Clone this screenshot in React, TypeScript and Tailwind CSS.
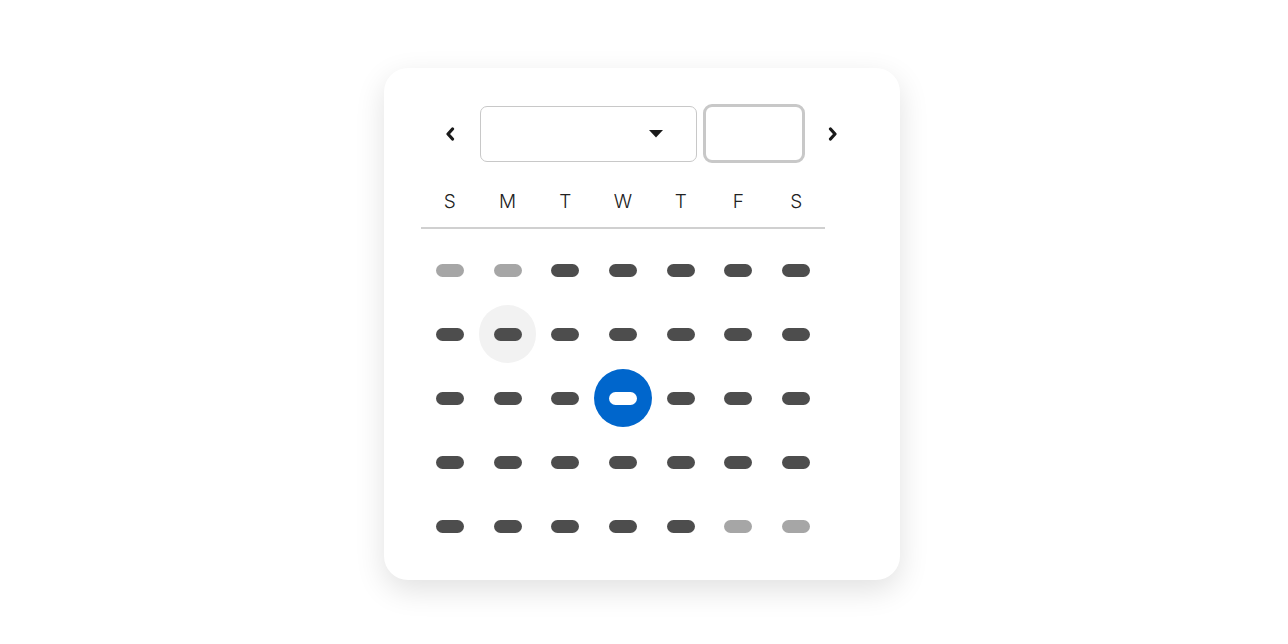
import React from 'react';

const DAYS = ['S', 'M', 'T', 'W', 'T', 'F', 'S'];

// 0 = muted, 1 = normal, 2 = hovered, 3 = selected
const WEEKS: number[][] = [
    [0, 0, 1, 1, 1, 1, 1],
    [1, 2, 1, 1, 1, 1, 1],
    [1, 1, 1, 3, 1, 1, 1],
    [1, 1, 1, 1, 1, 1, 1],
    [1, 1, 1, 1, 1, 0, 0],
];

const DayCell: React.FC<{ state: number }> = ({ state }) => {
    const circle =
        state === 3 ? 'bg-[#0066cc]' : state === 2 ? 'bg-[#f2f2f2]' : 'bg-transparent';
    const pill =
        state === 3 ? 'bg-white' : state === 0 ? 'bg-[#a6a6a6]' : 'bg-[#4d4d4d]';
    return (
        <div className="h-[64px] flex items-center justify-center">
            <div className={`w-[58px] h-[58px] rounded-full flex items-center justify-center ${circle}`}>
                <div className={`w-[28px] h-[13px] rounded-full ${pill}`} />
            </div>
        </div>
    );
};

const Chevron: React.FC<{ dir: 'left' | 'right' }> = ({ dir }) => (
    <svg width="10" height="14" viewBox="0 0 10 14" fill="none">
        <polyline
            points={dir === 'left' ? '7.5,2 3,7 7.5,12' : '2.5,2 7,7 2.5,12'}
            stroke="#1a1a1a"
            strokeWidth="3.2"
            strokeLinecap="round"
            strokeLinejoin="round"
        />
    </svg>
);

export default function App() {
    return (
        <div className="min-h-screen bg-white flex justify-center pt-[68px] pr-[4px]" style={{ fontFamily: 'Inter, "Liberation Sans", sans-serif' }}>
            <div className="w-[516px] h-[512px] bg-white rounded-[24px] shadow-[0_10px_30px_rgba(0,0,0,0.12)] pl-[37px] pt-[36px]">
                {/* Header */}
                <div className="flex items-center h-[59px]">
                    <button className="w-[58px] h-full flex items-center justify-center">
                        <Chevron dir="left" />
                    </button>
                    <div className="ml-[1px] w-[217px] h-[56px] border border-[#c8c8c8] rounded-[7px] flex items-center justify-end pr-[33px]">
                        <svg width="14" height="8" viewBox="0 0 14 8">
                            <polygon points="0,0 14,0 7,7.5" fill="#1a1a1a" />
                        </svg>
                    </div>
                    <div className="ml-[6px] w-[102px] h-[59px] border-[3px] border-[#c8c8c8] rounded-[9px]" />
                    <button className="w-[56px] h-full flex items-center justify-center">
                        <Chevron dir="right" />
                    </button>
                </div>

                {/* Day names */}
                <div className="w-[404px] mt-[14px] grid grid-cols-7 h-[52px] border-b-2 border-[#d0d0d0]">
                    {DAYS.map((d, i) => (
                        <div key={i} className="flex items-center justify-center text-[19px] font-light text-[#222]">
                            {d}
                        </div>
                    ))}
                </div>

                {/* Days */}
                <div className="w-[404px] pt-[9px] grid grid-cols-7">
                    {WEEKS.flat().map((s, i) => (
                        <DayCell key={i} state={s} />
                    ))}
                </div>
            </div>
        </div>
    );
}
